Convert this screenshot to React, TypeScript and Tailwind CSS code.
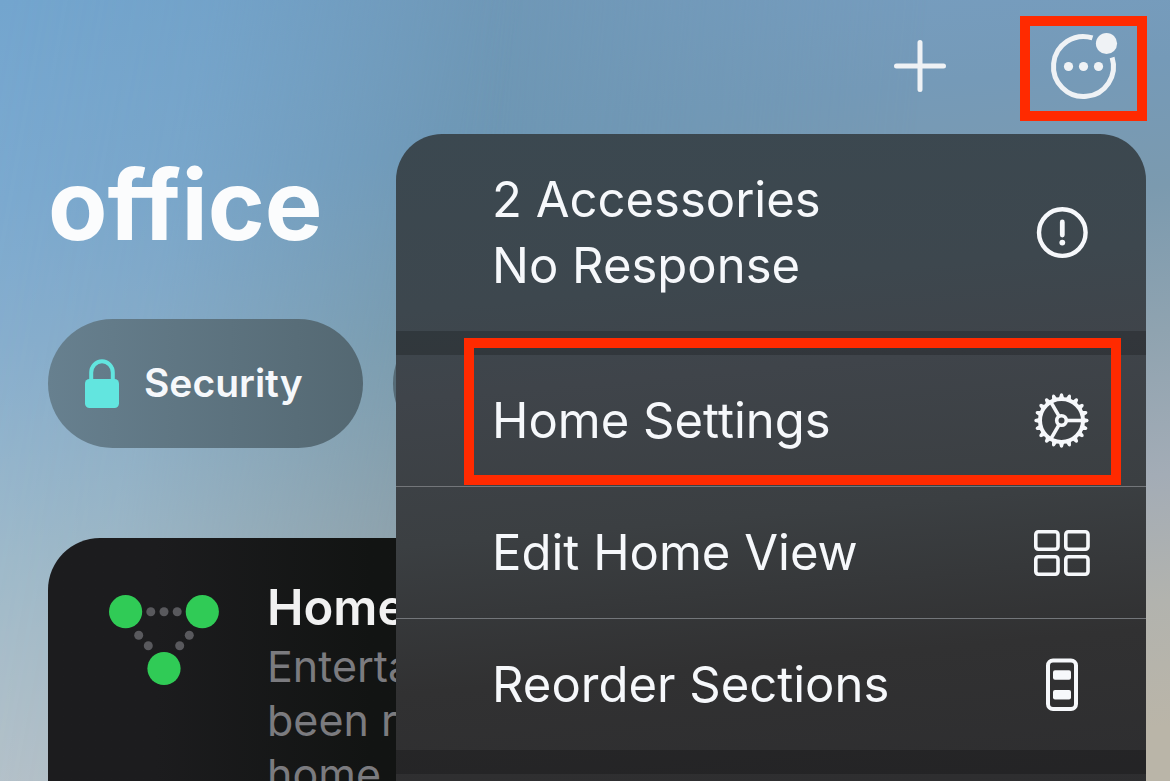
import type { ReactNode } from 'react'

const TEETH = Array.from({ length: 20 }, (_, i) => i * 18)
const SPOKES = [0, 120, 240]

function PlusIcon() {
  return (
    <svg width="52" height="52" viewBox="0 0 52 52" fill="none" stroke="#eff2f5" strokeWidth="5" strokeLinecap="round">
      <path d="M26 2.5v47M2.5 26h47" />
    </svg>
  )
}

function MoreIcon() {
  return (
    <svg width="68" height="68" viewBox="0 0 68 68" className="overflow-visible" fill="#eff2f5">
      <path d="M42.5 2.9A30 30 0 1 0 62.1 22.5" fill="none" stroke="#eff2f5" strokeWidth="5" />
      <circle cx="18.5" cy="31.5" r="4.6" />
      <circle cx="33.5" cy="31.5" r="4.6" />
      <circle cx="48.5" cy="31.5" r="4.6" />
      <circle cx="56.5" cy="8.5" r="10.6" />
    </svg>
  )
}

function LockIcon() {
  return (
    <svg width="34" height="50" viewBox="0 0 34 50">
      <path d="M6.2 22V13.5a10.8 11.3 0 0 1 21.6 0V22" fill="none" stroke="#62e5df" strokeWidth="4" />
      <rect x="0" y="20" width="34" height="29" rx="4.5" fill="#62e5df" />
    </svg>
  )
}

function NetworkIcon() {
  return (
    <svg width="110" height="92" viewBox="0 0 110 92" className="shrink-0">
      <g fill="#30cb56">
        <circle cx="16.6" cy="16.7" r="16.6" />
        <circle cx="93.3" cy="16.7" r="16.6" />
        <circle cx="55" cy="73.5" r="16.6" />
      </g>
      <g fill="#59595d">
        <circle cx="41.8" cy="16.7" r="4.5" />
        <circle cx="55" cy="16.7" r="4.5" />
        <circle cx="68.2" cy="16.7" r="4.5" />
        <circle cx="29.7" cy="40.3" r="4.5" />
        <circle cx="39.3" cy="50.8" r="4.5" />
        <circle cx="80.3" cy="40.3" r="4.5" />
        <circle cx="70.7" cy="50.8" r="4.5" />
      </g>
    </svg>
  )
}

function AlertIcon() {
  return (
    <svg width="56" height="56" viewBox="0 0 56 56" fill="none" stroke="#f6f8fb" strokeWidth="4.4">
      <circle cx="28.3" cy="27.6" r="23.3" />
      <path d="M28.3 17v13" strokeWidth="4.8" strokeLinecap="round" />
      <circle cx="28.3" cy="37.6" r="2.9" fill="#f6f8fb" stroke="none" />
    </svg>
  )
}

function GearIcon() {
  return (
    <svg width="56" height="56" viewBox="-27.5 -27.5 56 56" fill="none" stroke="#f6f8fb">
      <circle r="21.5" strokeWidth="4" />
      <circle r="4.8" strokeWidth="3.6" />
      {SPOKES.map(angle => (
        <path key={angle} d="M5 0H21" strokeWidth="3.6" transform={`rotate(${angle})`} />
      ))}
      {TEETH.map(angle => (
        <path
          key={angle}
          d="M22.5 -2.6L26.4 -1.4Q28 0 26.4 1.4L22.5 2.6Z"
          fill="#f6f8fb"
          stroke="none"
          transform={`rotate(${angle})`}
        />
      ))}
    </svg>
  )
}

function GridIcon() {
  return (
    <svg width="56" height="48" viewBox="0 0 56 48" fill="none" stroke="#f6f8fb" strokeWidth="3.6">
      <rect x="1.8" y="2.8" width="22.2" height="17.4" rx="2.6" />
      <rect x="31.8" y="2.8" width="22.2" height="17.4" rx="2.6" />
      <rect x="1.8" y="27.8" width="22.2" height="17.4" rx="2.6" />
      <rect x="31.8" y="27.8" width="22.2" height="17.4" rx="2.6" />
    </svg>
  )
}

function SectionsIcon() {
  return (
    <svg width="56" height="54" viewBox="0 0 56 54">
      <rect x="14" y="2.4" width="28" height="48.6" rx="5" fill="none" stroke="#f6f8fb" strokeWidth="4" />
      <rect x="19" y="12.3" width="18" height="9.4" rx="2" fill="#f6f8fb" />
      <rect x="19" y="32" width="18" height="9.4" rx="2" fill="#f6f8fb" />
    </svg>
  )
}

interface MenuItemProps {
  icon: ReactNode
  children: ReactNode
  divider?: boolean
  highlighted?: boolean
}

function MenuItem({ icon, children, divider, highlighted }: MenuItemProps) {
  return (
    <li className={divider ? 'relative border-b border-[#73767a]' : 'relative'}>
      <button className="flex w-full min-h-[131px] items-center justify-between py-8 pl-24 pr-14 text-left text-[49px] leading-[66px]">
        <span>{children}</span>
        {icon}
      </button>
      {highlighted && (
        <span className="pointer-events-none absolute -top-[17px] bottom-px left-[68px] right-[25px] border-10 border-[#ff2a00]" />
      )}
    </li>
  )
}

export default function App() {
  return (
    <div className="relative h-screen overflow-hidden bg-[linear-gradient(174deg,#779fc4_0%,#759ab8_20%,#7b9aaf_34%,#8fa3b0_50%,#a3acb6_66%,#b2b3ae_80%,#bab5a8_94%)] font-['Inter',sans-serif] text-[#f6f8fb]">
      <div className="absolute inset-0 bg-[linear-gradient(174deg,#6f97b6_0%,#6d96b3_22%,#7799ab_42%,#92a2aa_70%,#9aa5aa_100%)] [mask-image:linear-gradient(95deg,#000_0%,#000_38%,#0000_75%)]" />
      <div className="absolute inset-0 bg-[linear-gradient(174deg,#73a5ce_0%,#7caad0_22%,#88afcf_38%,#a0bccd_62%,#b0c2cd_78%,#c4c9ce_100%)] [mask-image:linear-gradient(100deg,#000_0%,#000c_16%,#0000_40%)]" />

      <div className="relative flex h-full flex-col">
        <header className="flex items-start justify-end gap-[74px] pr-[23px] pt-4">
          <button aria-label="Add" className="pt-6">
            <PlusIcon />
          </button>
          <button aria-label="More" className="flex h-[105px] w-[127px] items-center justify-center border-10 border-[#ff2a00]">
            <MoreIcon />
          </button>
        </header>

        <main className="flex flex-1 flex-col px-12">
          <h1 className="mt-7 text-[97px] font-bold leading-[112px] text-[#fbfcfd]">office</h1>

          <div className="mt-[58px] flex gap-[30px]">
            <button className="flex h-[129px] w-[315px] shrink-0 items-center gap-[25px] rounded-full bg-linear-to-r from-[#67808f] to-[#546872] pl-[37px] text-[39px] font-semibold">
              <LockIcon />
              Security
            </button>
            <div className="h-[129px] w-[315px] shrink-0 rounded-full bg-[#566b76]" />
          </div>

          <section className="mt-[90px] flex flex-1 shrink-0 gap-12 rounded-t-[52px] bg-linear-to-r from-[#1c1c1e] from-10% to-[#121413] to-30% pl-[61px] pt-[39px]">
            <div className="pt-[18px]">
              <NetworkIcon />
            </div>
            <div className="whitespace-nowrap">
              <h2 className="text-[49px] font-semibold leading-[62px] text-[#f1f1f1]">Home</h2>
              <p className="text-[43px] leading-[54px] text-[#7b7b7f]">
                Enterta
                <br />
                been r
                <br />
                home
              </p>
            </div>
          </section>
        </main>
      </div>

      <nav className="absolute right-6 top-[134px] w-[750px] overflow-hidden rounded-t-[46px] bg-[linear-gradient(175deg,#3b4850_0%,#3d474e_24%,#3f444a_36%,#3b3f42_56%,#313132_76%,#2d2d2f_100%)]">
        <ul>
          <li>
            <button className="flex min-h-[197px] w-full items-center justify-between pl-24 pr-14 text-left text-[49px] leading-[66px]">
              <span>
                2 Accessories
                <br />
                No Response
              </span>
              <AlertIcon />
            </button>
          </li>
          <li className="h-6 bg-black/20" />
          <MenuItem icon={<GearIcon />} divider highlighted>Home Settings</MenuItem>
          <MenuItem icon={<GridIcon />} divider>Edit Home View</MenuItem>
          <MenuItem icon={<SectionsIcon />}>Reorder Sections</MenuItem>
          <li className="h-6 bg-black/20" />
          <li className="h-8" />
        </ul>
      </nav>
    </div>
  )
}
